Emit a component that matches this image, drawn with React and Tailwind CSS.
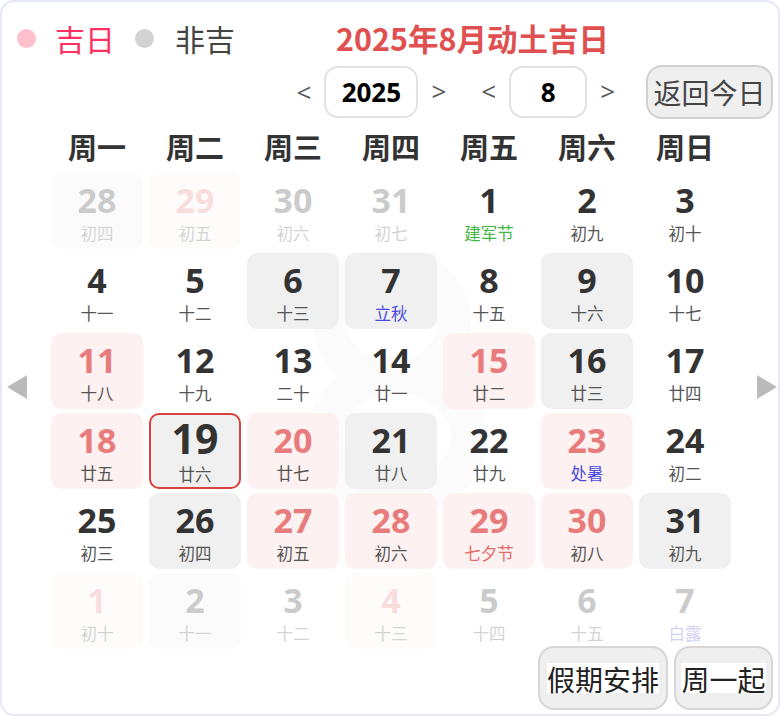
const FONT = { fontFamily: '"Open Sans", "Noto Sans CJK SC", sans-serif' };
const CJK = { fontFamily: '"Noto Sans CJK SC", sans-serif' };

const weekdays = ["周一", "周二", "周三", "周四", "周五", "周六", "周日"];

// [number, lunar, bg, tone, lunar colour, faded]
const days = [
  [28, "初四", "gray", "normal", "", true],
  [29, "初五", "pink", "pink", "", true],
  [30, "初六", "none", "normal", "", true],
  [31, "初七", "none", "normal", "", true],
  [1, "建军节", "none", "normal", "green"],
  [2, "初九", "none", "normal"],
  [3, "初十", "none", "normal"],
  [4, "十一", "none", "normal"],
  [5, "十二", "none", "normal"],
  [6, "十三", "gray", "normal"],
  [7, "立秋", "gray", "normal", "blue"],
  [8, "十五", "none", "normal"],
  [9, "十六", "gray", "normal"],
  [10, "十七", "none", "normal"],
  [11, "十八", "pink", "pink"],
  [12, "十九", "none", "normal"],
  [13, "二十", "none", "normal"],
  [14, "廿一", "none", "normal"],
  [15, "廿二", "pink", "pink"],
  [16, "廿三", "gray", "normal"],
  [17, "廿四", "none", "normal"],
  [18, "廿五", "pink", "pink"],
  [19, "廿六", "today", "normal"],
  [20, "廿七", "pink", "pink"],
  [21, "廿八", "gray", "normal"],
  [22, "廿九", "none", "normal"],
  [23, "处暑", "pink", "pink", "blue"],
  [24, "初二", "none", "normal"],
  [25, "初三", "none", "normal"],
  [26, "初四", "gray", "normal"],
  [27, "初五", "pink", "pink"],
  [28, "初六", "pink", "pink"],
  [29, "七夕节", "pink", "pink", "red"],
  [30, "初八", "pink", "pink"],
  [31, "初九", "gray", "normal"],
  [1, "初十", "pink", "pink", "", true],
  [2, "十一", "gray", "normal", "", true],
  [3, "十二", "none", "normal", "", true],
  [4, "十三", "pink", "pink", "", true],
  [5, "十四", "none", "normal", "", true],
  [6, "十五", "none", "normal", "", true],
  [7, "白露", "none", "normal", "blue", true],
];

const bgClass = {
  none: "",
  gray: "bg-[#f0f0f0]",
  pink: "bg-[#fdf2f1]",
  today: "bg-[#f0f0f0] border-2 border-[#d9423c]",
};

const lunarClass = {
  green: "text-[#3fb63f]",
  blue: "text-[#4a4ae0]",
  red: "text-[#e46a6a]",
};

function DayCell({ day }) {
  const [num, lunar, bg, tone, lc, faded] = day;
  const isToday = bg === "today";
  return (
    <div
      className={`h-[76px] rounded-[10px] flex flex-col items-center justify-center ${bgClass[bg]} ${
        faded ? "opacity-25" : ""
      }`}
    >
      <div
        className={`font-bold leading-none ${
          isToday ? "text-[41px] -mt-[2px]" : "text-[34px] mt-[2px]"
        } ${tone === "pink" ? "text-[#e87c7c]" : "text-[#333]"}`}
      >
        {num}
      </div>
      <div
        className={`text-[16.5px] leading-none ${isToday ? "mt-[7px]" : "mt-[8px]"} ${
          lc ? lunarClass[lc] : "text-[#555]"
        }`}
        style={CJK}
      >
        {lunar}
      </div>
    </div>
  );
}

function Arrow({ children }) {
  return <span className="text-[26px] text-[#555] leading-none w-[14px] text-center">{children}</span>;
}

export default function App() {
  return (
    <div
      className="w-[780px] h-[716px] border-2 border-[#e6e9f5] rounded-[14px] bg-white relative overflow-hidden"
      style={FONT}
    >
      {/* faint watermark drawing */}
      <svg className="absolute left-[290px] top-[250px]" width="200" height="260" viewBox="0 0 200 260">
        <ellipse cx="100" cy="70" rx="62" ry="58" fill="none" stroke="#fbfbfb" strokeWidth="34" />
        <ellipse cx="105" cy="185" rx="72" ry="62" fill="none" stroke="#fbfbfb" strokeWidth="36" />
      </svg>

      <div className="relative">
        {/* legend + title */}
        <div className="flex items-center h-[44px] mt-[14px] pl-[15px]" style={CJK}>
          <span className="w-[19px] h-[19px] rounded-full bg-[#ffc0cb]" />
          <span className="ml-[19px] text-[30px] text-[#ff3060] leading-none">吉日</span>
          <span className="ml-[20px] w-[19px] h-[19px] rounded-full bg-[#d3d3d3]" />
          <span className="ml-[21px] text-[30px] text-[#444] leading-none">非吉</span>
          <span className="ml-[101px] text-[30.5px] font-bold text-[#e05050] leading-none">
            2025年8月动土吉日
          </span>
        </div>

        {/* year / month selector */}
        <div className="flex items-center justify-end h-[54px] mt-[5px] pr-[5px]">
          <Arrow>&lt;</Arrow>
          <div className="ml-[14px] w-[94px] h-[52px] border-2 border-[#e2e2e2] rounded-[14px] flex items-center justify-center text-[26px] font-bold text-black">
            2025
          </div>
          <span className="ml-[13px]"><Arrow>&gt;</Arrow></span>
          <span className="ml-[35px]"><Arrow>&lt;</Arrow></span>
          <div className="ml-[13px] w-[78px] h-[52px] border-2 border-[#e2e2e2] rounded-[14px] flex items-center justify-center text-[26px] font-bold text-black">
            8
          </div>
          <span className="ml-[13px]"><Arrow>&gt;</Arrow></span>
          <button
            className="ml-[31px] w-[127px] h-[54px] bg-[#efefef] border-2 border-[#d0d0d0] rounded-[16px] text-[28px] text-[#444] leading-none"
            style={CJK}
          >
            返回今日
          </button>
        </div>

        {/* weekday header */}
        <div className="ml-[49px] mt-[7px] grid grid-cols-[repeat(7,92px)] gap-x-[6px] h-[40px] items-center">
          {weekdays.map((w) => (
            <div key={w} className="text-center text-[29px] font-bold text-[#333] leading-none" style={CJK}>
              {w}
            </div>
          ))}
        </div>

        {/* day grid */}
        <div className="ml-[49px] mt-[7px] grid grid-cols-[repeat(7,92px)] gap-x-[6px] gap-y-[4px]">
          {days.map((d, i) => (
            <DayCell key={i} day={d} />
          ))}
        </div>

        {/* bottom buttons */}
        <div className="flex justify-end gap-[6px] pr-[5px] -mt-[3px]" style={CJK}>
          <button className="w-[130px] h-[64px] bg-[#efefef] border-2 border-[#d6d6d6] rounded-[16px] text-[28px] text-[#222] leading-none flex items-center justify-center">
            <span className="bg-white pt-[2px]">假期安排</span>
          </button>
          <button className="w-[99px] h-[64px] bg-[#efefef] border-2 border-[#d6d6d6] rounded-[16px] text-[28px] text-[#222] leading-none flex items-center justify-center">
            <span className="bg-white pt-[2px]">周一起</span>
          </button>
        </div>
      </div>

      {/* side arrows */}
      <svg className="absolute left-[5px] top-[373px]" width="20" height="24" viewBox="0 0 20 24">
        <polygon points="20,0 20,24 0,12" fill="#bbbbbb" />
      </svg>
      <svg className="absolute left-[755px] top-[373px]" width="20" height="24" viewBox="0 0 20 24">
        <polygon points="0,0 0,24 20,12" fill="#bbbbbb" />
      </svg>
    </div>
  );
}
